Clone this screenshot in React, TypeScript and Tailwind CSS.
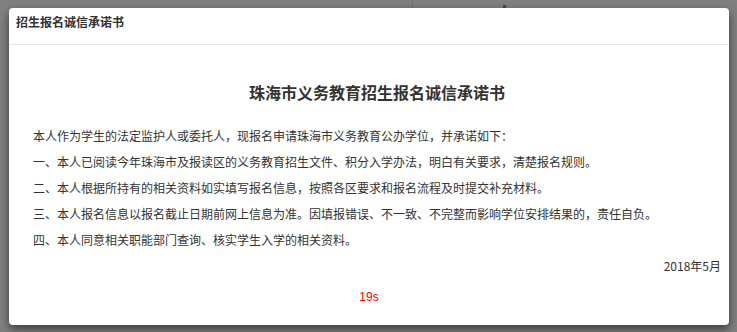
export default function App() {
  const font = { fontFamily: '"Noto Sans CJK SC", "Noto Sans", sans-serif' };
  return (
    <div className="relative w-[737px] h-[332px] bg-[#808080] overflow-hidden" style={font}>
      <div className="absolute left-[412px] top-0 w-px h-[7px] bg-[#6e6e6e]" />
      <div className="absolute left-[503px] top-[5px] w-[3px] h-[3px] bg-[#2a4f78]" />
      <div className="absolute left-[9px] top-[8px] w-[720px] h-[317px] bg-white rounded-[4px] shadow-[0_4px_10px_rgba(0,0,0,0.55)] text-[#333]">
        <div className="h-[37px] px-[7px] pt-[7px] border-b border-[#e5e5e5] text-[12px] leading-[14px] font-bold">
          招生报名诚信承诺书
        </div>
        <div className="pl-[24px] pr-[8px] pt-[35px]">
          <div className="text-center text-[16px] leading-[24px] font-bold">
            珠海市义务教育招生报名诚信承诺书
          </div>
          <div className="mt-[19px] text-[12px] leading-[26px]">
            <p>本人作为学生的法定监护人或委托人，现报名申请珠海市义务教育公办学位，并承诺如下：</p>
            <p>一、本人已阅读今年珠海市及报读区的义务教育招生文件、积分入学办法，明白有关要求，清楚报名规则。</p>
            <p>二、本人根据所持有的相关资料如实填写报名信息，按照各区要求和报名流程及时提交补充材料。</p>
            <p>三、本人报名信息以报名截止日期前网上信息为准。因填报错误、不一致、不完整而影响学位安排结果的，责任自负。</p>
            <p>四、本人同意相关职能部门查询、核实学生入学的相关资料。</p>
            <p className="text-right">2018年5月</p>
          </div>
        </div>
        <div className="mt-[8px] text-center text-[12px] leading-[20px] text-[#ff0000]" style={{ fontFamily: '"Liberation Sans", Arial, sans-serif' }}>
          19s
        </div>
      </div>
    </div>
  );
}
